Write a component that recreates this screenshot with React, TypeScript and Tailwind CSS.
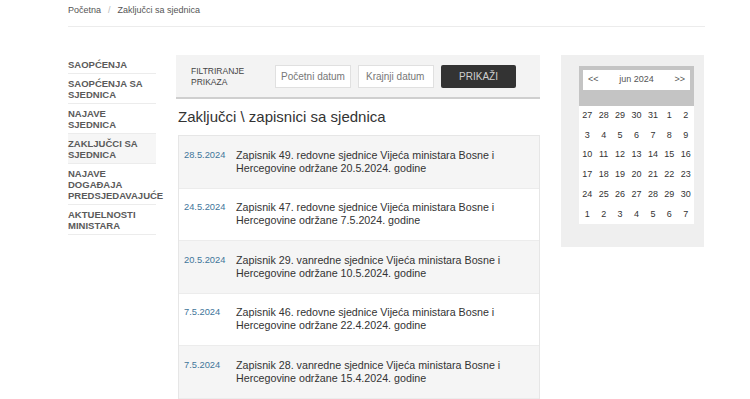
import React from "react";

const sidebar = [
  { lines: ["SAOPĆENJA"] },
  { lines: ["SAOPĆENJA SA", "SJEDNICA"] },
  { lines: ["NAJAVE", "SJEDNICA"] },
  { lines: ["ZAKLJUČCI SA", "SJEDNICA"], active: true },
  { lines: ["NAJAVE", "DOGAĐAJA", "PREDSJEDAVAJUĆE"] },
  { lines: ["AKTUELNOSTI", "MINISTARA"] },
];

const rows = [
  { date: "28.5.2024", l1: "Zapisnik 49. redovne sjednice Vijeća ministara Bosne i", l2: "Hercegovine održane 20.5.2024. godine" },
  { date: "24.5.2024", l1: "Zapisnik 47. redovne sjednice Vijeća ministara Bosne i", l2: "Hercegovine održane 7.5.2024. godine" },
  { date: "20.5.2024", l1: "Zapisnik 29. vanredne sjednice Vijeća ministara Bosne i", l2: "Hercegovine održane 10.5.2024. godine" },
  { date: "7.5.2024", l1: "Zapisnik 46. redovne sjednice Vijeća ministara Bosne i", l2: "Hercegovine održane 22.4.2024. godine" },
  { date: "7.5.2024", l1: "Zapisnik 28. vanredne sjednice Vijeća ministara Bosne i", l2: "Hercegovine održane 15.4.2024. godine" },
];

const weeks = [
  [27, 28, 29, 30, 31, 1, 2],
  [3, 4, 5, 6, 7, 8, 9],
  [10, 11, 12, 13, 14, 15, 16],
  [17, 18, 19, 20, 21, 22, 23],
  [24, 25, 26, 27, 28, 29, 30],
  [1, 2, 3, 4, 5, 6, 7],
];

export default function App() {
  return (
    <div className="w-[750px] h-[399px] overflow-hidden bg-white font-['Liberation_Sans',Arial,sans-serif] text-[#333]">
      <div className="pl-[68px] pr-[45px]">
        <div className="h-[27px] border-b border-[#ececec] flex items-start pt-[4px] text-[9px] text-[#555]">
          <span>Početna</span>
          <span className="mx-[7px] text-[#bbb]">/</span>
          <span>Zaključci sa sjednica</span>
        </div>
        <div className="flex mt-[28px]">
          <div className="w-[88px] shrink-0">
            {sidebar.map((s, i) => (
              <div
                key={i}
                className={`pt-[4px] pb-[3px] border-b border-[#ececec] text-[9.5px] leading-[11px] font-bold text-[#5a5a5a] ${s.active ? "bg-[#f6f6f6]" : ""}`}
              >
                {s.lines.map((l, j) => (
                  <div key={j}>{l}</div>
                ))}
              </div>
            ))}
          </div>
          <div className="w-[364px] ml-[20px] shrink-0">
            <div className="h-[44px] bg-[#f3f3f3] border-b-2 border-[#cfcfcf] flex items-center pl-[15px]">
              <div className="w-[84px] text-[8.5px] leading-[11px] pt-[2px] text-[#444]">
                FILTRIRANJE
                <br />
                PRIKAZA
              </div>
              <div className="w-[76px] h-[23px] bg-white border border-[#e0e0e0] flex items-center px-[5px] text-[10px] text-[#777]">
                Početni datum
              </div>
              <div className="w-[76px] h-[23px] ml-[7px] bg-white border border-[#e0e0e0] flex items-center px-[7px] text-[10px] text-[#777]">
                Krajnji datum
              </div>
              <div className="w-[75px] h-[23px] ml-[7px] bg-[#333] rounded-[2px] flex items-center justify-center text-[10px] text-[#cfcfcf]">
                PRIKAŽI
              </div>
            </div>
            <div className="pl-[2px] mt-[9px] text-[15px] leading-[18px] text-[#333]">
              Zaključci \ zapisnici sa sjednica
            </div>
            <div className="ml-[2px] mt-[9px] border border-[#e6e6e6]">
              {rows.map((r, i) => (
                <div
                  key={i}
                  className={`h-[52.5px] flex items-center border-b border-[#ececec] ${i % 2 === 0 ? "bg-[#f5f5f5]" : "bg-white"}`}
                >
                  <div className="flex items-start pl-[5px]">
                    <div className="w-[52px] text-[9.3px] leading-[13px] text-[#41759a]">{r.date}</div>
                    <div className="text-[10.7px] leading-[13px] text-[#333]">
                      <div>{r.l1}</div>
                      <div>{r.l2}</div>
                    </div>
                  </div>
                </div>
              ))}
            </div>
          </div>
          <div className="ml-[21px] w-[143px] h-[192px] bg-[#efefef] pl-[18px] pt-[11px] shrink-0">
            <div className="w-[115px]">
              <div className="h-[40px] bg-[#c4c4c4] pt-[4px] px-[4px]">
                <div className="h-[20px] bg-white flex items-center justify-between px-[5px] text-[9px] text-[#555]">
                  <span>&lt;&lt;</span>
                  <span>jun 2024</span>
                  <span>&gt;&gt;</span>
                </div>
              </div>
              <div className="bg-white">
                {weeks.map((w, i) => (
                  <div key={i} className="grid grid-cols-7 h-[19.7px] items-center text-[9px] text-[#333]">
                    {w.map((d, j) => (
                      <div key={j} className="text-center">
                        {d}
                      </div>
                    ))}
                  </div>
                ))}
              </div>
            </div>
          </div>
        </div>
      </div>
    </div>
  );
}
